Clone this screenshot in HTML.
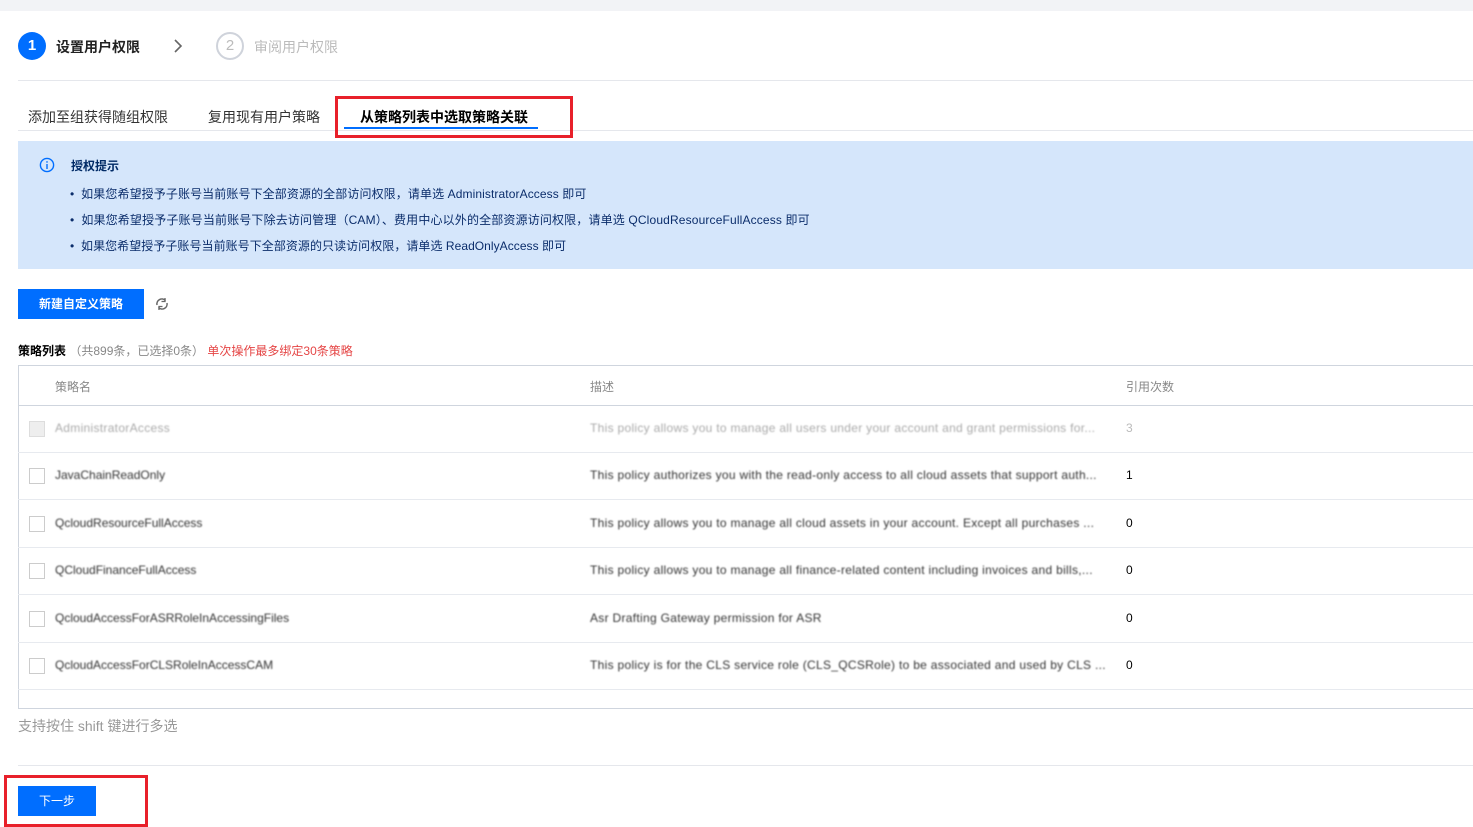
<!DOCTYPE html><html><head><meta charset="utf-8"><style>
*{margin:0;padding:0;box-sizing:border-box}
body{width:1473px;height:824px;overflow:hidden;background:#fff;font-family:"Liberation Sans","Noto Sans CJK SC",sans-serif;font-size:12px;color:#000;position:relative}
.a{position:absolute;white-space:nowrap}
.blur{filter:blur(0.9px)}
</style></head><body>
<div class="a" style="left:0;top:0;width:1473px;height:11px;background:#f2f3f6"></div>
<div class="a" style="left:18px;top:32px;width:28px;height:28px;border-radius:50%;background:#006eff;color:#fff;font-size:15px;font-weight:bold;text-align:center;line-height:28px">1</div>
<div class="a" style="left:56px;top:37px;font-size:14px;font-weight:bold;color:#222">设置用户权限</div>
<svg class="a" style="left:172px;top:38px" width="12" height="16"><path d="M3 2l6 6-6 6" stroke="#666" stroke-width="1.6" fill="none"/></svg>
<div class="a" style="left:216px;top:32px;width:28px;height:28px;border-radius:50%;border:2px solid #cfd3db;color:#bbb;font-size:15px;text-align:center;line-height:24px">2</div>
<div class="a" style="left:254px;top:37px;font-size:14px;color:#bbb">审阅用户权限</div>
<div class="a" style="left:18px;top:80px;width:1455px;height:1px;background:#e5e7ec"></div>
<div class="a" style="left:28px;top:107px;font-size:14px;color:#333">添加至组获得随组权限</div>
<div class="a" style="left:208px;top:107px;font-size:14px;color:#333">复用现有用户策略</div>
<div class="a" style="left:360px;top:107px;font-size:14px;font-weight:bold;color:#000">从策略列表中选取策略关联</div>
<div class="a" style="left:344px;top:127px;width:194px;height:2px;background:#006eff"></div>
<div class="a" style="left:18px;top:130px;width:1455px;height:1px;background:#e5e7ec"></div>
<div class="a" style="left:335px;top:96px;width:238px;height:42px;border:3px solid #e8202a"></div>
<div class="a" style="left:18px;top:141px;width:1455px;height:128px;background:#d5e6fb"></div>
<svg class="a" style="left:39px;top:157px" width="16" height="16"><circle cx="8" cy="8" r="6.6" stroke="#006eff" stroke-width="1.4" fill="none"/><rect x="7.3" y="7" width="1.4" height="5" fill="#006eff"/><rect x="7.3" y="4.2" width="1.4" height="1.5" fill="#006eff"/></svg>
<div class="a" style="left:71px;top:157px;font-weight:bold;color:#002a66">授权提示</div>
<div class="a" style="left:70px;top:185px;color:#0b2d6b;letter-spacing:0.1px">• &nbsp;如果您希望授予子账号当前账号下全部资源的全部访问权限，请单选 AdministratorAccess 即可</div>
<div class="a" style="left:70px;top:211px;color:#0b2d6b;letter-spacing:0.15px">• &nbsp;如果您希望授予子账号当前账号下除去访问管理（CAM）、费用中心以外的全部资源访问权限，请单选 QCloudResourceFullAccess 即可</div>
<div class="a" style="left:70px;top:237px;color:#0b2d6b;letter-spacing:0.05px">• &nbsp;如果您希望授予子账号当前账号下全部资源的只读访问权限，请单选 ReadOnlyAccess 即可</div>
<div class="a" style="left:18px;top:289px;width:126px;height:30px;background:#006eff;color:#fff;font-weight:bold;text-align:center;line-height:30px">新建自定义策略</div>
<svg class="a" style="left:154px;top:296px" width="16" height="16"><path d="M3 9a5 5 0 0 1 8.5-4.5M13 7a5 5 0 0 1-8.5 4.5" stroke="#666" stroke-width="1.5" fill="none"/><path d="M11 2v3.5h-3.5M5 14v-3.5h3.5" stroke="#666" stroke-width="1.3" fill="none"/></svg>
<div class="a" style="left:18px;top:342px;color:#000;font-weight:bold">策略列表 <span style="font-weight:normal;color:#888">（共899条，已选择0条）</span> <span style="font-weight:normal;color:#e54545">单次操作最多绑定30条策略</span></div>
<div class="a" style="left:18px;top:365px;width:1455px;height:344px;border:1px solid #cfd5de;border-right:none"></div>
<div class="a" style="left:55px;top:378px;color:#888">策略名</div>
<div class="a" style="left:590px;top:378px;color:#888">描述</div>
<div class="a" style="left:1126px;top:378px;color:#888">引用次数</div>
<div class="a" style="left:18px;top:405px;width:1455px;height:1px;background:#cfd5de"></div>
<div class="a" style="left:18px;top:452px;width:1455px;height:1px;background:#e7eaef"></div>
<div class="a" style="left:18px;top:499px;width:1455px;height:1px;background:#e7eaef"></div>
<div class="a" style="left:18px;top:547px;width:1455px;height:1px;background:#e7eaef"></div>
<div class="a" style="left:18px;top:594px;width:1455px;height:1px;background:#e7eaef"></div>
<div class="a" style="left:18px;top:642px;width:1455px;height:1px;background:#e7eaef"></div>
<div class="a" style="left:18px;top:689px;width:1455px;height:1px;background:#e7eaef"></div>
<div class="a" style="left:29px;top:421px;width:16px;height:16px;border:1px solid #ddd;background:#eee"></div>
<div class="a blur" style="left:55px;top:421px;color:#aaa;letter-spacing:0.3px">AdministratorAccess</div>
<div class="a blur" style="left:590px;top:421px;color:#aaa;letter-spacing:0.3px">This policy allows you to manage all users under your account and grant permissions for...</div>
<div class="a" style="left:1126px;top:421px;color:#bbb">3</div>
<div class="a" style="left:29px;top:468px;width:16px;height:16px;border:1px solid #ccc"></div>
<div class="a blur" style="left:55px;top:468px;color:#333">JavaChainReadOnly</div>
<div class="a blur" style="left:590px;top:468px;color:#333;letter-spacing:0.3px">This policy authorizes you with the read-only access to all cloud assets that support auth...</div>
<div class="a" style="left:1126px;top:468px">1</div>
<div class="a" style="left:29px;top:516px;width:16px;height:16px;border:1px solid #ccc"></div>
<div class="a blur" style="left:55px;top:516px;color:#333">QcloudResourceFullAccess</div>
<div class="a blur" style="left:590px;top:516px;color:#333;letter-spacing:0.3px">This policy allows you to manage all cloud assets in your account. Except all purchases ...</div>
<div class="a" style="left:1126px;top:516px">0</div>
<div class="a" style="left:29px;top:563px;width:16px;height:16px;border:1px solid #ccc"></div>
<div class="a blur" style="left:55px;top:563px;color:#333">QCloudFinanceFullAccess</div>
<div class="a blur" style="left:590px;top:563px;color:#333;letter-spacing:0.3px">This policy allows you to manage all finance-related content including invoices and bills,...</div>
<div class="a" style="left:1126px;top:563px">0</div>
<div class="a" style="left:29px;top:611px;width:16px;height:16px;border:1px solid #ccc"></div>
<div class="a blur" style="left:55px;top:611px;color:#333">QcloudAccessForASRRoleInAccessingFiles</div>
<div class="a blur" style="left:590px;top:611px;color:#333;letter-spacing:0.3px">Asr Drafting Gateway permission for ASR</div>
<div class="a" style="left:1126px;top:611px">0</div>
<div class="a" style="left:29px;top:658px;width:16px;height:16px;border:1px solid #ccc"></div>
<div class="a blur" style="left:55px;top:658px;color:#333">QcloudAccessForCLSRoleInAccessCAM</div>
<div class="a blur" style="left:590px;top:658px;color:#333;letter-spacing:0.3px">This policy is for the CLS service role (CLS_QCSRole) to be associated and used by CLS ...</div>
<div class="a" style="left:1126px;top:658px">0</div>
<div class="a" style="left:18px;top:716px;font-size:14px;color:#999">支持按住 shift 键进行多选</div>
<div class="a" style="left:18px;top:765px;width:1455px;height:1px;background:#e5e7ec"></div>
<div class="a" style="left:18px;top:786px;width:78px;height:30px;background:#006eff;color:#fff;text-align:center;line-height:30px">下一步</div>
<div class="a" style="left:4px;top:775px;width:144px;height:52px;border:3px solid #e8202a"></div>
</body></html>
